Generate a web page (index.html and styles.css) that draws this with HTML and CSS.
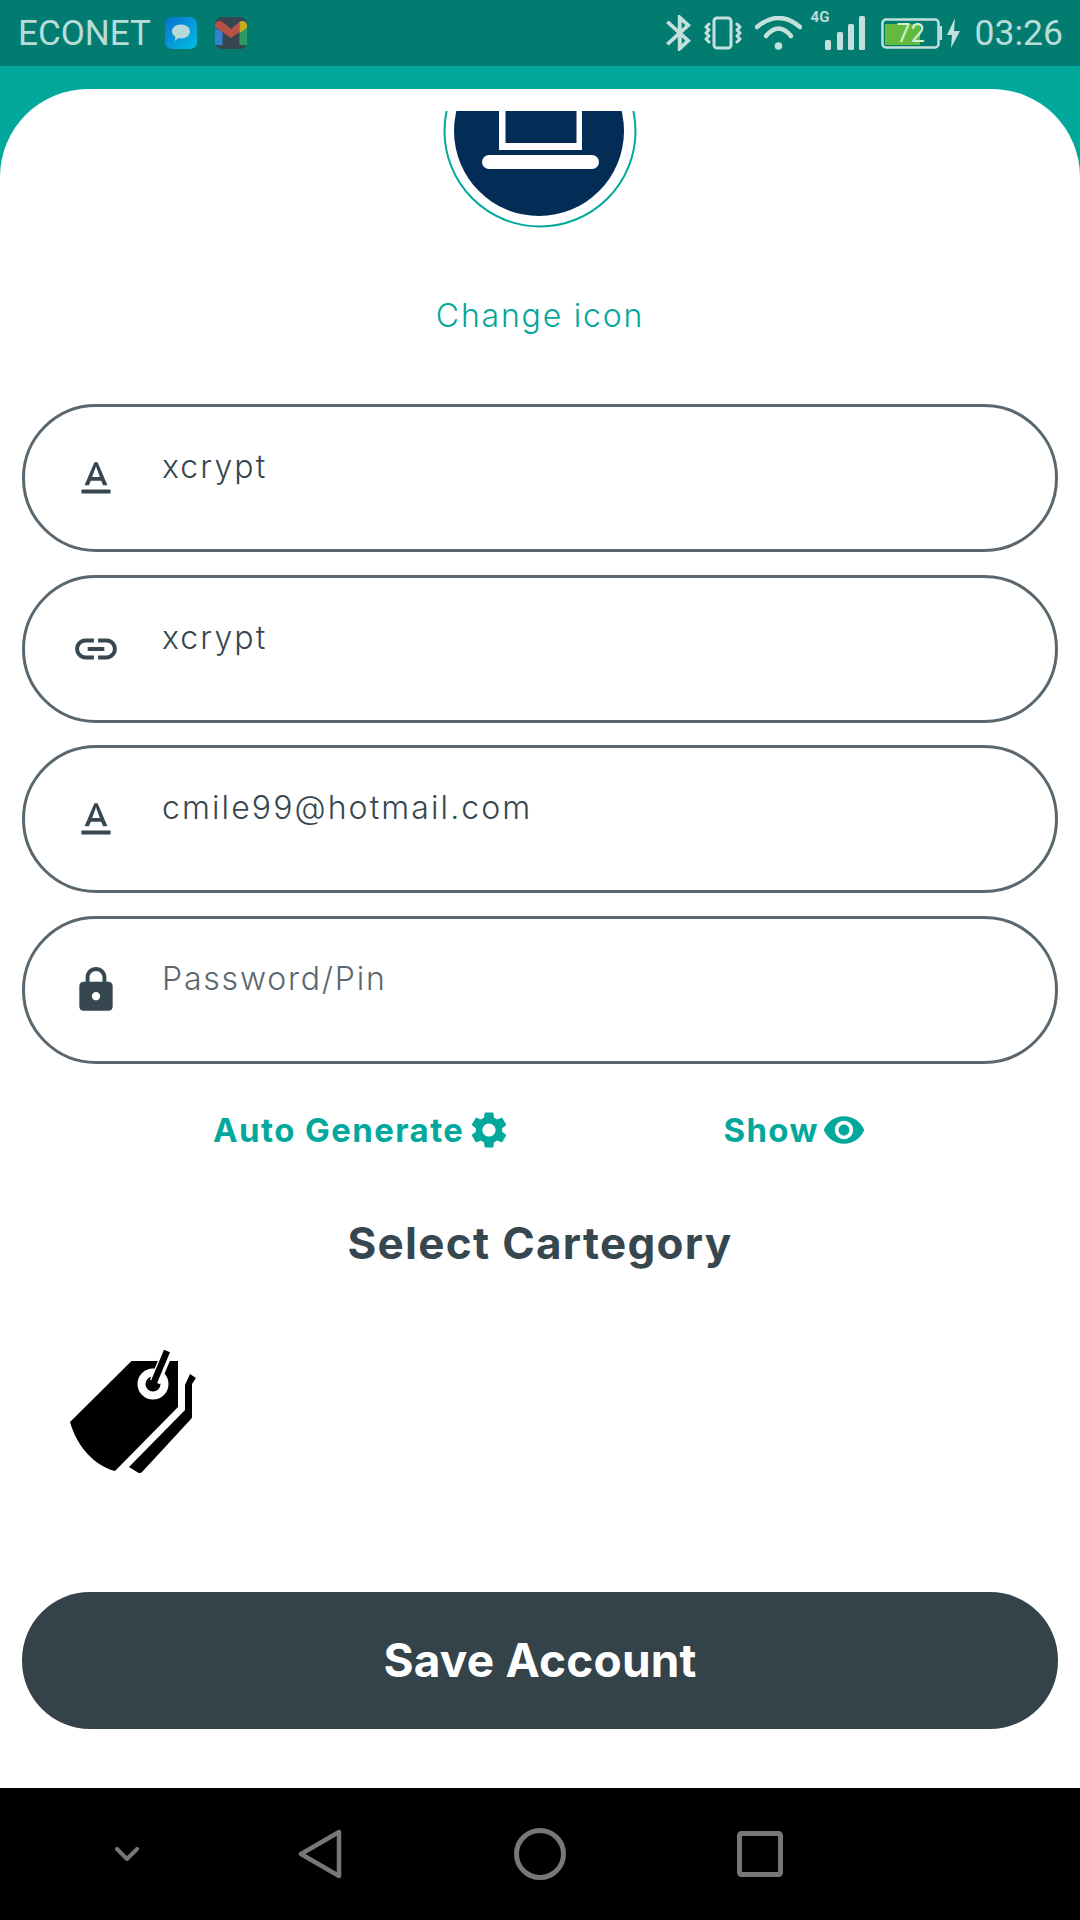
FILE: index.html
```html
<!DOCTYPE html>
<html lang="en">
<head>
<meta charset="utf-8">
<title>Edit account</title>
<link rel="stylesheet" href="styles.css">
</head>
<body>
<div class="screen">
  <header class="status">
    <div class="status-left">
      <span class="carrier">ECONET</span>
      <svg class="app-icon" viewBox="0 0 32 32">
        <defs><linearGradient id="msg" x1="0" y1="0" x2="1" y2="1"><stop offset="0" stop-color="#0a6fd0"/><stop offset="1" stop-color="#03bfe0"/></linearGradient></defs>
        <rect width="32" height="32" rx="7" fill="url(#msg)"/>
        <path d="M16 7.500c5.200 0 9 3 9 7s-3.800 7-9 7c-1 0-2-.1-2.800-.4L10 24l.3-4.200C8.200 18.500 7 16.600 7 14.500c0-4 3.800-7 9-7z" fill="#b5d8d8"/>
      </svg>
      <svg class="app-icon gmail" viewBox="0 0 32 32">
        <rect width="32" height="32" rx="7" fill="#37474f"/>
        <path d="M0 11v17l7.500 0V15z" fill="#3383d0"/>
        <path d="M24.500 15v13H32V11z" fill="#2a9c64"/>
        <path d="M0 9c0-5 5-6 7.500-4L16 12l8.500-7 0 10L16 21 7.500 15 0 10z" fill="#b85246"/>
        <path d="M24.500 5c2.500-2 7.500-1 7.500 4v2l-7.500 5z" fill="#c6ad1f"/>
      </svg>
    </div>
    <div class="status-right">
      <svg class="st-bt" viewBox="5 2 12.710 20" preserveAspectRatio="none"><path d="M17.710 7.710L12 2h-1v7.590L6.410 5 5 6.410 10.590 12 5 17.590 6.410 19 11 14.410V22h1l5.710-5.710-4.300-4.290 4.300-4.290zM13 5.830l1.880 1.880L13 9.590V5.830zm1.880 10.460L13 18.170v-3.760l1.880 1.880z"/></svg>
      <svg class="st-vib" viewBox="0 0 38 34">
        <rect x="10" y="2" width="17" height="30" rx="3"/>
        <path d="M5 8L2 11l3 3-3 3 3 3-3 3 3 3"/>
        <path d="M33 8l3 3-3 3 3 3-3 3 3 3-3 3"/>
      </svg>
      <svg class="st-wifi" viewBox="0 0 47 34">
        <path d="M2 11Q23.500-7 45 11"/>
        <path d="M11 20Q23.500 5 36 20"/>
        <circle cx="23.500" cy="30" r="3.800"/>
      </svg>
      <div class="signal">
        <span class="net">4G</span>
        <svg class="st-sig" viewBox="0 0 41 34">
          <rect x="1" y="24" width="6" height="10" rx="1.500"/>
          <rect x="13" y="16" width="6" height="18" rx="1.500"/>
          <rect x="24" y="8" width="6" height="26" rx="1.500"/>
          <rect x="35" y="0" width="6" height="34" rx="1.500"/>
        </svg>
      </div>
      <div class="battery">
        <svg class="st-bat" viewBox="0 0 61 31">
          <rect class="bat-fill" x="4" y="6" width="35" height="21"/>
          <rect class="bat-shell" x="1.500" y="1.500" width="56" height="28" rx="3.500"/>
          <rect class="bat-cap" x="58.500" y="8" width="2.500" height="14"/>
        </svg>
        <span class="bat-num">72</span>
      </div>
      <svg class="st-bolt" viewBox="0 0 15 30"><path d="M9 0L1 17h5L5 30l9-17H8z"/></svg>
      <span class="clock">03:26</span>
    </div>
  </header>

  <main class="stage">
    <section class="card">
      <svg class="avatar" viewBox="443 111 194 118">
        <circle class="ring" cx="540" cy="131" r="95.500"/>
        <circle class="disc" cx="539" cy="131" r="85"/>
        <rect class="lap" x="499" y="80" width="83" height="70"/>
        <rect class="disc" x="505.500" y="80" width="71" height="63"/>
        <rect class="lap" x="482" y="155" width="117" height="14" rx="7"/>
      </svg>
      <a class="change">Change icon</a>

      <div class="fields">
        <div class="field">
          <svg class="f-icon" viewBox="0 0 24 24"><path d="M5 17v2h14v-2H5zm4.500-4.200h5l.9 2.200h2.100L12.750 4h-1.500L6.500 15h2.100l.9-2.200zM12 5.980L13.870 11h-3.740L12 5.980z"/></svg>
          <span class="f-text">xcrypt</span>
        </div>
        <div class="field">
          <svg class="f-icon" viewBox="0 0 24 24"><path d="M3.900 12c0-1.710 1.390-3.100 3.100-3.100h4V7H7c-2.760 0-5 2.240-5 5s2.240 5 5 5h4v-1.900H7c-1.710 0-3.100-1.390-3.100-3.100zM8 13h8v-2H8v2zm9-6h-4v1.900h4c1.710 0 3.100 1.390 3.100 3.100s-1.390 3.100-3.100 3.100h-4V17h4c2.760 0 5-2.240 5-5s-2.240-5-5-5z"/></svg>
          <span class="f-text">xcrypt</span>
        </div>
        <div class="field">
          <svg class="f-icon" viewBox="0 0 24 24"><path d="M5 17v2h14v-2H5zm4.500-4.200h5l.9 2.200h2.100L12.750 4h-1.500L6.500 15h2.100l.9-2.200zM12 5.980L13.870 11h-3.740L12 5.980z"/></svg>
          <span class="f-text">cmile99@hotmail.com</span>
        </div>
        <div class="field">
          <svg class="f-icon" viewBox="0 0 24 24"><path d="M18 8h-1V6c0-2.760-2.240-5-5-5S7 3.240 7 6v2H6c-1.100 0-2 .9-2 2v10c0 1.100.9 2 2 2h12c1.100 0 2-.9 2-2V10c0-1.100-.9-2-2-2zm-6 9c-1.100 0-2-.9-2-2s.9-2 2-2 2 .9 2 2-.9 2-2 2zm3.100-9H8.900V6c0-1.710 1.390-3.100 3.100-3.100 1.710 0 3.100 1.390 3.100 3.100v2z"/></svg>
          <span class="f-text placeholder">Password/Pin</span>
        </div>
      </div>

      <div class="actions">
        <a class="action">Auto Generate
          <svg class="a-icon" viewBox="0 0 24 24"><path d="M19.140 12.940c.04-.3.06-.61.06-.94 0-.32-.02-.64-.07-.94l2.030-1.580c.18-.14.23-.41.12-.61l-1.920-3.320c-.12-.22-.37-.29-.59-.22l-2.390.96c-.5-.38-1.030-.7-1.620-.94l-.36-2.540c-.04-.24-.24-.41-.48-.41h-3.840c-.24 0-.43.17-.47.41l-.36 2.540c-.59.24-1.130.57-1.620.94l-2.390-.96c-.22-.08-.47 0-.59.22L2.740 8.870c-.12.21-.08.47.12.61l2.030 1.580c-.05.3-.09.63-.09.94s.02.64.07.94l-2.030 1.580c-.18.14-.23.41-.12.61l1.920 3.320c.12.22.37.29.59.22l2.390-.96c.5.38 1.030.7 1.620.94l.36 2.540c.05.24.24.41.48.41h3.840c.24 0 .44-.17.47-.41l.36-2.540c.59-.24 1.130-.56 1.620-.94l2.390.96c.22.08.47 0 .59-.22l1.920-3.320c.12-.22.07-.47-.12-.61l-2.010-1.580zM12 15.600c-1.980 0-3.600-1.620-3.600-3.600s1.620-3.600 3.600-3.600 3.600 1.620 3.600 3.600-1.620 3.600-3.600 3.600z"/></svg>
        </a>
        <a class="action">Show
          <svg class="a-icon" viewBox="0 0 24 24"><path d="M12 4.500C7 4.500 2.730 7.610 1 12c1.730 4.390 6 7.500 11 7.500s9.270-3.110 11-7.500c-1.730-4.390-6-7.500-11-7.500zM12 17c-2.760 0-5-2.240-5-5s2.240-5 5-5 5 2.240 5 5-2.240 5-5 5zm0-8c-1.660 0-3 1.340-3 3s1.340 3 3 3 3-1.340 3-3-1.340-3-3-3z"/></svg>
        </a>
      </div>

      <h2 class="heading">Select Cartegory</h2>

      <svg class="tag" viewBox="18 16 130 128">
        <path d="M136 55L141 44l6 4-4 6v32a4 4 0 0 1-1 3L94 141a4 4 0 0 1-6 1l-8-5 56-57z" fill="#000"/>
        <path d="M82.500 31H129v46L66 141c-20-5-38-24-45-49z" fill="#000"/>
        <circle cx="104" cy="54" r="15.500" fill="#fff"/>
        <circle cx="104" cy="54" r="7.500" fill="#000"/>
        <path d="M119 21L106 52" stroke="#fff" stroke-width="11" fill="none"/>
        <path d="M118 21L105 52" stroke="#000" stroke-width="6.500" fill="none"/>
      </svg>

      <button class="save">Save Account</button>
    </section>
  </main>

  <nav class="navbar">
    <svg class="n-chev" viewBox="0 0 24 14"><path d="M2 2l10 10L22 2"/></svg>
    <svg class="n-back" viewBox="0 0 44 50"><path d="M41 3v44L3 25z"/></svg>
    <svg class="n-home" viewBox="0 0 52 52"><circle cx="26" cy="26" r="23.500"/></svg>
    <svg class="n-recent" viewBox="0 0 46 46"><rect x="2.500" y="2.500" width="41" height="41" rx="2"/></svg>
  </nav>
</div>
</body>
</html>
```

FILE: styles.css
```css
* { box-sizing: border-box; }
html, body { margin: 0; padding: 0; }
body { font-family: Inter, "Open Sans", sans-serif; background: #fff; }

.screen { width: 1080px; height: 1920px; display: flex; flex-direction: column; overflow: hidden; }

/* status bar */
.status { height: 66px; flex: none; background: #027c71; display: flex; justify-content: space-between; align-items: center; padding: 0 17px 0 18px; color: #b8dcd8; }
.status-left { display: flex; align-items: center; }
.carrier { font-family: Roboto, sans-serif; font-size: 35px; font-weight: 400; line-height: 66px; width: 147px; padding-top: 1px; }
.app-icon { width: 32px; height: 32px; display: block; }
.gmail { margin-left: 18px; }
.status-right { display: flex; align-items: center; }
.status-right svg { display: block; fill: #c4e0dc; }
.st-bt { width: 25px; height: 36px; margin-right: 13px; }
.st-vib { width: 38px; height: 34px; margin-right: 13px; fill: none !important; stroke: #c4e0dc; stroke-width: 3; stroke-linecap: round; stroke-linejoin: round; }
.st-wifi { width: 47px; height: 34px; margin-right: 22px; }
.st-wifi path { fill: none; stroke: #c4e0dc; stroke-width: 4.500; stroke-linecap: round; }
.signal { position: relative; width: 41px; height: 34px; margin-right: 16px; }
.st-sig { width: 41px; height: 34px; }
.net { position: absolute; left: -13px; top: -6px; font-family: Roboto, sans-serif; font-weight: 700; font-size: 15px; line-height: 15px; }
.battery { position: relative; width: 61px; height: 31px; margin-right: 4px; }
.st-bat { width: 61px; height: 31px; }
.bat-fill { fill: #62bb3e; }
.bat-shell { fill: none; stroke: #c4e0dc; stroke-width: 2.500; }
.bat-num { position: absolute; left: 16px; top: 0; font-family: Roboto, sans-serif; font-size: 25px; line-height: 31px; color: #d6f0cc; }
.st-bolt { width: 15px; height: 30px; margin-right: 14px; }
.clock { font-family: Roboto, sans-serif; font-size: 35.500px; font-weight: 400; line-height: 66px; }

/* main */
.stage { flex: 1; background: #02a89c; padding-top: 23px; display: flex; min-height: 0; }
.card { flex: 1; background: #fff; border-radius: 88px 88px 0 0; padding: 22px 22px 0; display: flex; flex-direction: column; align-items: center; }

.avatar { width: 194px; height: 118px; display: block; flex: none; }
.ring { fill: none; stroke: #02a89c; stroke-width: 2; }
.disc { fill: #032d57; }
.lap { fill: #fff; }

.change { margin-top: 67px; font-size: 32px; font-weight: 300; line-height: 40px; color: #02a89c; letter-spacing: 1.8px; }

.fields { align-self: stretch; margin-top: 68px; display: flex; flex-direction: column; gap: 22.670px; }
.field { height: 148px; border: 3px solid #5b676f; border-radius: 74px; display: flex; align-items: center; padding-left: 46px; }
.f-icon { width: 50px; height: 50px; flex: none; fill: #37474f; display: block; margin-top: 1px; }
.f-text { margin-left: 41px; align-self: flex-start; padding-top: 40px; font-size: 32px; font-weight: 300; line-height: 40px; color: #37474f; letter-spacing: 2.100px; }
.placeholder { color: #5b676f; letter-spacing: 1.800px; }

.actions { align-self: stretch; margin-top: 43px; padding: 0 192px 0 191px; display: flex; justify-content: space-between; }
.action { display: flex; align-items: center; gap: 3px; font-size: 33px; font-weight: 700; line-height: 46px; color: #02a89c; letter-spacing: 1.400px; }
.a-icon { width: 44px; height: 44px; fill: #02a89c; display: block; flex: none; }

.heading { margin: 65px 0 0; font-size: 44px; font-weight: 700; line-height: 50px; color: #37474f; letter-spacing: 1.300px; }

.tag { width: 130px; height: 128px; display: block; align-self: flex-start; margin: 78px 0 0 45px; flex: none; }

.save { align-self: stretch; height: 137px; margin-top: 118px; border: 0; border-radius: 68px; background: #344249; color: #fff; font-family: inherit; font-size: 46px; font-weight: 700; letter-spacing: 0.200px; }

/* nav */
.navbar { height: 132px; flex: none; background: #000; display: flex; align-items: center; padding-left: 115px; }
.navbar svg { display: block; fill: none; stroke: #777; stroke-linejoin: round; stroke-linecap: round; }
.n-chev { width: 24px; height: 14px; stroke-width: 4; }
.n-back { width: 44px; height: 50px; margin-left: 159px; stroke-width: 4.500; }
.n-home { width: 52px; height: 52px; margin-left: 172px; stroke-width: 5; }
.n-recent { width: 46px; height: 46px; margin-left: 171px; stroke-width: 5; }
```
